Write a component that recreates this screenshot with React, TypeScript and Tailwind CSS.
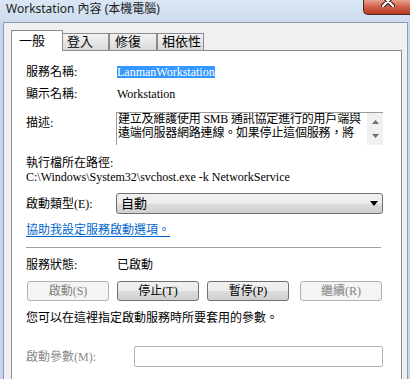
import React from "react";

const F = "font-['Liberation_Serif','Noto_Sans_CJK_TC',serif]";

function Btn({ label, disabled, className }: { label: string; disabled?: boolean; className?: string }) {
  return (
    <div
      className={
        (disabled
          ? "border-[#adb2b5] bg-[#f4f4f4] text-[#838383] "
          : "border-[#707070] bg-[linear-gradient(to_bottom,#f2f2f2_0%,#ebebeb_50%,#dddddd_51%,#cfcfcf_100%)] text-black ") +
        "w-[82px] h-[20px] rounded-[3px] border flex items-center justify-center text-[12px] leading-[12px] " +
        (className ?? "")
      }
    >
      {label}
    </div>
  );
}

export default function App() {
  return (
    <div className={"w-[410px] h-[379px] overflow-hidden flex flex-col bg-[#c3d6ec] text-black text-[12px] " + F}>
      {/* title bar */}
      <div className="h-[22px] flex items-start justify-between bg-[linear-gradient(to_bottom,#dae6f4,#cddcee)]">
        <div className="h-[18px] flex items-center pl-[6px] font-['Noto_Sans','Noto_Sans_CJK_TC',sans-serif] text-[12px] text-[#1e1e1e]">
          Workstation 內容 (本機電腦)
        </div>
        <div className="w-[47px] h-[15px] rounded-bl-[5px] border-l border-b border-[#4a2a24] bg-[linear-gradient(to_bottom,#e8a290,#d0604a_50%,#b83a22)] flex justify-center overflow-hidden">
          <svg width="14" height="12" viewBox="0 0 14 12" className="-mt-[5px] ml-[2px]">
            <path d="M2 1 L12 11 M12 1 L2 11" stroke="#3a2320" strokeWidth="4.5" strokeLinecap="round" />
            <path d="M2 1 L12 11 M12 1 L2 11" stroke="#ffffff" strokeWidth="2.2" strokeLinecap="round" />
          </svg>
        </div>
      </div>

      {/* window body */}
      <div className="flex-1 flex flex-col ml-[3px] mr-[2px] border-x border-t border-[#8d9cb0] bg-[#f0f0f0] pl-[7px] pr-[5px] pt-[7px]">
        {/* tabs */}
        <div className="flex items-end h-[20px]">
          <div className="h-[21px] -mb-px w-[52px] bg-white border border-b-0 border-[#898c95] relative z-10 flex items-center pl-[7px] text-[13px]">
            一般
          </div>
          <div className="h-[17px] w-[47px] -ml-px border border-b-0 border-[#898c95] bg-[linear-gradient(to_bottom,#f3f3f3,#e6e6e6_50%,#d9d9d9)] flex items-center pl-[4px] text-[13px]">
            登入
          </div>
          <div className="h-[17px] w-[48px] border border-b-0 border-[#898c95] bg-[linear-gradient(to_bottom,#f3f3f3,#e6e6e6_50%,#d9d9d9)] flex items-center pl-[5px] text-[13px]">
            修復
          </div>
          <div className="h-[17px] w-[47px] border border-b-0 border-[#898c95] bg-[linear-gradient(to_bottom,#f3f3f3,#e6e6e6_50%,#d9d9d9)] flex items-center pl-[4px] text-[13px]">
            相依性
          </div>
        </div>

        {/* panel */}
        <div className="flex-1 flex flex-col bg-white border border-b-0 border-[#898c95] pl-[14px] pr-[18px] pt-[10px]">
          <div className="flex items-center h-[22px]">
            <div className="w-[90px]">服務名稱:</div>
            <span className="ml-px inline-block h-[12px] leading-[12px] bg-[#3399ff] text-white">LanmanWorkstation</span>
          </div>
          <div className="flex items-center h-[22px]">
            <div className="w-[90px]">顯示名稱:</div>
            <span className="ml-px">Workstation</span>
          </div>
          <div className="flex items-start h-[33px] mt-[7px]">
            <div className="w-[90px] h-[22px] flex items-center">描述:</div>
            <div className="flex-1 h-[33px] flex border-t border-l border-[#9a9a9a]">
              <div className="flex-1 overflow-hidden">
                <div className="-mt-px pl-px leading-[14px] tracking-[-0.2px]">
                  建立及維護使用 SMB 通訊協定進行的用戶端與
                  <br />
                  遠端伺服器網路連線。如果停止這個服務，將
                </div>
              </div>
              <div className="w-[16px] bg-[#f0f0f0] flex flex-col items-center justify-between py-[7px]">
                <svg width="7" height="4" viewBox="0 0 7 4">
                  <path d="M3.5 0 L7 4 L0 4 Z" fill="#707070" />
                </svg>
                <svg width="7" height="4" viewBox="0 0 7 4">
                  <path d="M0 0 L7 0 L3.5 4 Z" fill="#707070" />
                </svg>
              </div>
            </div>
          </div>
          <div className="mt-[11px] h-[14px] flex items-center">執行檔所在路徑:</div>
          <div className="h-[14px] flex items-center">C:\Windows\System32\svchost.exe -k NetworkService</div>
          <div className="mt-[9px] flex items-center h-[21px]">
            <div className="w-[90px]">啟動類型(E):</div>
            <div className="flex-1 h-[21px] rounded-[3px] border border-[#707070] bg-[linear-gradient(to_bottom,#f2f2f2_0%,#ebebeb_50%,#dddddd_51%,#cfcfcf_100%)] flex items-center justify-between pl-[4px] pr-[4px] text-[13px]">
              <span>自動</span>
              <svg width="8" height="5" viewBox="0 0 8 5">
                <path d="M0 0 L8 0 L4 5 Z" fill="#000" />
              </svg>
            </div>
          </div>
          <div className="mt-[9px] h-[14px] flex items-center">
            <span className="text-[#0066cc] underline underline-offset-2">協助我設定服務啟動選項。</span>
          </div>
          <div className="mt-[10px] h-px bg-[#a0a0a0] mr-[2px]" />
          <div className="mt-[10px] h-[14px] flex items-center">
            <div className="w-[90px]">服務狀態:</div>
            <span className="ml-px">已啟動</span>
          </div>
          <div className="mt-[9px] flex h-[20px]">
            <Btn label="啟動(S)" disabled className="ml-px" />
            <Btn label="停止(T)" className="ml-[8px]" />
            <Btn label="暫停(P)" className="ml-[8px]" />
            <Btn label="繼續(R)" disabled className="ml-[11px]" />
          </div>
          <div className="mt-[10px] h-[14px] flex items-center">您可以在這裡指定啟動服務時所要套用的參數。</div>
          <div className="mt-[21px] flex items-center h-[21px]">
            <div className="w-[108px] text-[#8a8a8a]">啟動參數(M):</div>
            <div className="flex-1 h-[21px] rounded-[2px] border border-[#b5b5b5] bg-white" />
          </div>
        </div>
      </div>
    </div>
  );
}
